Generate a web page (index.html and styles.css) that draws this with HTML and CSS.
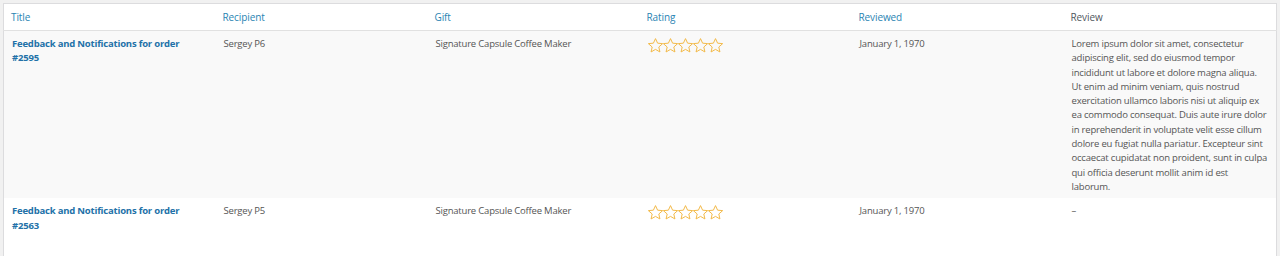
FILE: index.html
```html
<!DOCTYPE html>
<html>
<head>
<meta charset="utf-8">
<link rel="stylesheet" href="styles.css">
</head>
<body>
<div class="wrap">
<table class="list">
  <colgroup>
    <col class="c"><col class="c"><col class="c"><col class="c"><col class="c"><col class="c-last">
  </colgroup>
  <thead>
    <tr>
      <th><a class="sort">Title</a></th>
      <th><a class="sort">Recipient</a></th>
      <th><a class="sort">Gift</a></th>
      <th><a class="sort">Rating</a></th>
      <th><a class="sort">Reviewed</a></th>
      <th class="plain">Review</th>
    </tr>
  </thead>
  <tbody>
    <tr class="alt">
      <td><a class="title">Feedback and Notifications for order #2595</a></td>
      <td>Sergey P6</td>
      <td>Signature Capsule Coffee Maker</td>
      <td><span class="stars">
        <svg viewBox="2 2 20 20"><path d="M12 2.8l2.8 6.1 6.7.6-5.1 4.5 1.5 6.6L12 17.2l-5.9 3.4 1.5-6.6-5.1-4.5 6.7-.6z"/></svg>
        <svg viewBox="2 2 20 20"><path d="M12 2.8l2.8 6.1 6.7.6-5.1 4.5 1.5 6.6L12 17.2l-5.9 3.4 1.5-6.6-5.1-4.5 6.7-.6z"/></svg>
        <svg viewBox="2 2 20 20"><path d="M12 2.8l2.8 6.1 6.7.6-5.1 4.5 1.5 6.6L12 17.2l-5.9 3.4 1.5-6.6-5.1-4.5 6.7-.6z"/></svg>
        <svg viewBox="2 2 20 20"><path d="M12 2.8l2.8 6.1 6.7.6-5.1 4.5 1.5 6.6L12 17.2l-5.9 3.4 1.5-6.6-5.1-4.5 6.7-.6z"/></svg>
        <svg viewBox="2 2 20 20"><path d="M12 2.8l2.8 6.1 6.7.6-5.1 4.5 1.5 6.6L12 17.2l-5.9 3.4 1.5-6.6-5.1-4.5 6.7-.6z"/></svg>
      </span></td>
      <td>January 1, 1970</td>
      <td class="review">Lorem ipsum dolor sit amet, consectetur adipiscing elit, sed do eiusmod tempor incididunt ut labore et dolore magna aliqua. Ut enim ad minim veniam, quis nostrud exercitation ullamco laboris nisi ut aliquip ex ea commodo consequat. Duis aute irure dolor in reprehenderit in voluptate velit esse cillum dolore eu fugiat nulla pariatur. Excepteur sint occaecat cupidatat non proident, sunt in culpa qui officia deserunt mollit anim id est laborum.</td>
    </tr>
    <tr>
      <td><a class="title">Feedback and Notifications for order #2563</a></td>
      <td>Sergey P5</td>
      <td>Signature Capsule Coffee Maker</td>
      <td><span class="stars">
        <svg viewBox="2 2 20 20"><path d="M12 2.8l2.8 6.1 6.7.6-5.1 4.5 1.5 6.6L12 17.2l-5.9 3.4 1.5-6.6-5.1-4.5 6.7-.6z"/></svg>
        <svg viewBox="2 2 20 20"><path d="M12 2.8l2.8 6.1 6.7.6-5.1 4.5 1.5 6.6L12 17.2l-5.9 3.4 1.5-6.6-5.1-4.5 6.7-.6z"/></svg>
        <svg viewBox="2 2 20 20"><path d="M12 2.8l2.8 6.1 6.7.6-5.1 4.5 1.5 6.6L12 17.2l-5.9 3.4 1.5-6.6-5.1-4.5 6.7-.6z"/></svg>
        <svg viewBox="2 2 20 20"><path d="M12 2.8l2.8 6.1 6.7.6-5.1 4.5 1.5 6.6L12 17.2l-5.9 3.4 1.5-6.6-5.1-4.5 6.7-.6z"/></svg>
        <svg viewBox="2 2 20 20"><path d="M12 2.8l2.8 6.1 6.7.6-5.1 4.5 1.5 6.6L12 17.2l-5.9 3.4 1.5-6.6-5.1-4.5 6.7-.6z"/></svg>
      </span></td>
      <td>January 1, 1970</td>
      <td class="review">–</td>
    </tr>
  </tbody>
</table>
</div>
</body>
</html>
```
FILE: styles.css
```css
html, body {
  margin: 0;
  padding: 0;
  background: #f1f1f1;
  height: 100%;
  overflow: hidden;
}
.wrap {
  padding: 3px 3px 0 3px;
}
.list {
  width: 1274px;
  border-collapse: collapse;
  table-layout: fixed;
  background: #fff;
  border: 1px solid #dcdcde;
  font-family: "Open Sans", "Noto Sans", sans-serif;
  font-size: 9.5px;
  letter-spacing: -0.2px;
  line-height: 14.3px;
  color: #555;
}
.c { width: 212px; }
th {
  text-align: left;
  font-weight: 400;
  padding: 6px 7px 5px 7px;
  height: 15px;
  border-bottom: 1px solid #e1e1e1;
  font-size: 10px;
  letter-spacing: -0.1px;
}
th .sort { color: #2a84b3; }
th.plain { color: #50575e; }
td {
  vertical-align: top;
  padding: 6px 8px 4px 8px;
}
tr.alt td { background: #f9f9f9; }
tbody tr:last-child td { height: 60px; }
.title {
  color: #2271a8;
  font-weight: 700;
  display: block;
  padding-right: 10px;
}
.stars {
  display: flex;
  gap: 0;
  margin-top: 1px;
}
.stars svg {
  width: 15px;
  height: 15px;
  fill: none;
  stroke: #f2b845;
  stroke-width: 1.3;
  stroke-linejoin: miter;
}
```
